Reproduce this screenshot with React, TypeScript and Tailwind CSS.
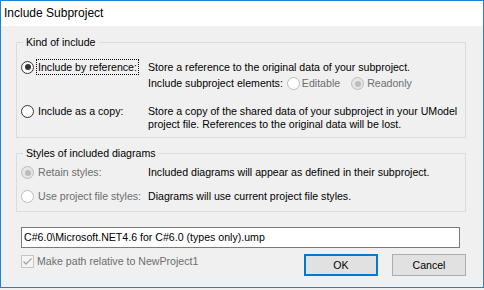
import React from 'react';

const font = { fontFamily: '"Liberation Sans", Arial, sans-serif' };

type RadioProps = { checked?: boolean; disabled?: boolean };

const Radio = ({ checked, disabled }: RadioProps) => (
  <span
    className={`flex w-[13px] h-[13px] shrink-0 items-center justify-center rounded-full border ${
      disabled
        ? checked
          ? 'border-[#bcbcbc] bg-[#e6e6e6]'
          : 'border-[#bcbcbc] bg-white'
        : 'border-[#333333] bg-white'
    }`}
  >
    {checked && (
      <span className={`w-[6px] h-[6px] rounded-full ${disabled ? 'bg-[#bcbcbc]' : 'bg-[#333333]'}`} />
    )}
  </span>
);

const GroupBox = ({ label, className, children }: { label: string; className?: string; children: React.ReactNode }) => (
  <fieldset className={`w-[450px] border border-[#dcdcdc] pl-[4px] pr-[4px] ${className ?? ''}`}>
    <legend className="ml-[2px] px-[3px] leading-[13px] text-black">{label}</legend>
    {children}
  </fieldset>
);

export default function App() {
  return (
    <div className="w-[484px] h-[290px] bg-[#f0f0f0] text-[10.6px] leading-[13px] whitespace-nowrap" style={font}>
      <div className="w-[484px] h-[288px] border border-[#1883d7] flex flex-col">
        {/* Title bar */}
        <div className="h-[25px] bg-white flex items-center pl-[3px] text-[12px] text-black">Include Subproject</div>

        {/* Body */}
        <div className="flex-1 bg-[#f0f0f0] pl-[15px] pt-[10px]">
          <GroupBox label="Kind of include" className="pb-[6px]">
            <div className="flex flex-col pt-[10px]">
              <div className="flex h-[16px] items-center">
                <div className="w-[127px] flex items-center">
                  <Radio checked />
                  <span className="ml-[2px] border border-dotted border-black px-[1px] leading-[14px]">Include by reference:</span>
                </div>
                <span>Store a reference to the original data of your subproject.</span>
              </div>
              <div className="flex h-[13px] items-center mt-[2px]">
                <div className="w-[127px]" />
                <span>Include subproject elements:</span>
                <div className="flex items-center ml-[4px] text-[#6d6d6d]">
                  <Radio disabled />
                  <span className="ml-[2px]">Editable</span>
                  <span className="ml-[11px]">
                    <Radio checked disabled />
                  </span>
                  <span className="ml-[3px]">Readonly</span>
                </div>
              </div>
              <div className="flex mt-[15px]">
                <div className="w-[127px] h-[13px] flex items-center">
                  <Radio />
                  <span className="ml-[4px]">Include as a copy:</span>
                </div>
                <div className="flex flex-col">
                  <span>Store a copy of the shared data of your subproject in your UModel</span>
                  <span>project file. References to the original data will be lost.</span>
                </div>
              </div>
            </div>
          </GroupBox>

          <GroupBox label="Styles of included diagrams" className="mt-[9px] pb-[8px]">
            <div className="flex flex-col pt-[6px]">
              <div className="flex h-[13px] items-center">
                <div className="w-[127px] flex items-center text-[#6d6d6d]">
                  <Radio checked disabled />
                  <span className="ml-[4px]">Retain styles:</span>
                </div>
                <span>Included diagrams will appear as defined in their subproject.</span>
              </div>
              <div className="flex h-[13px] items-center mt-[11px]">
                <div className="w-[127px] flex items-center text-[#6d6d6d]">
                  <Radio disabled />
                  <span className="ml-[4px]">Use project file styles:</span>
                </div>
                <span>Diagrams will use current project file styles.</span>
              </div>
            </div>
          </GroupBox>

          <div className="ml-[5px] mt-[15px] w-[439px] h-[21px] border border-[#7a7a7a] bg-white flex items-center pl-[2px] text-black">
            C#6.0\Microsoft.NET4.6 for C#6.0 (types only).ump
          </div>

          <div className="flex mt-[6px] w-[450px]">
            <div className="ml-[5px] mt-[1px] flex items-center h-[13px] text-[#6d6d6d]">
              <span className="w-[13px] h-[13px] border border-[#c4c4c4] bg-[#f4f4f4] flex items-center justify-center">
                <svg width="11" height="11" viewBox="0 0 11 11">
                  <path d="M1.5 5.5 L4 8 L9.5 2.5" fill="none" stroke="#a8a8a8" strokeWidth="1.4" />
                </svg>
              </span>
              <span className="ml-[3px]">Make path relative to NewProject1</span>
            </div>
            <div className="ml-auto flex gap-[14px]">
              <button className="w-[74px] h-[22px] border-2 border-[#0078d7] bg-[#e1e1e1] text-black">OK</button>
              <button className="w-[74px] h-[22px] border border-[#adadad] bg-[#e1e1e1] text-black">Cancel</button>
            </div>
          </div>
        </div>
      </div>
    </div>
  );
}
